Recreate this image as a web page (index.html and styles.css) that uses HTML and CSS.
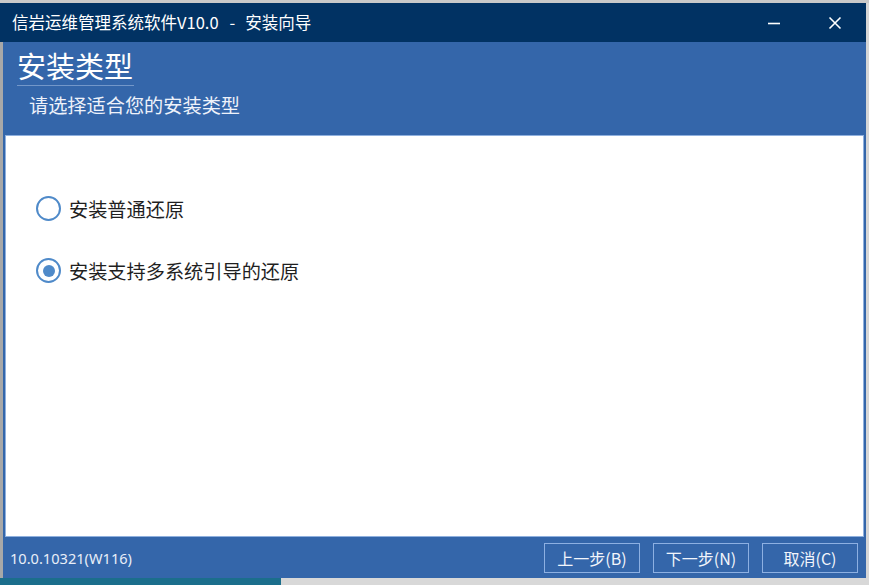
FILE: index.html
```html
<!DOCTYPE html>
<html lang="zh-CN">
<head>
<meta charset="utf-8">
<title>安装向导</title>
<link rel="stylesheet" href="styles.css">
</head>
<body>
<div class="desktop">
  <div class="bgstrip"></div>
  <div class="window">
    <div class="titlebar">
      <span class="title">信岩运维管理系统软件V10.0<span class="sep">-</span>安装向导</span>
      <div class="controls">
        <span class="ctl">
          <svg width="14" height="14" viewBox="0 0 14 14"><path d="M1 7.5h12" stroke="#fff" stroke-width="1.6"/></svg>
        </span>
        <span class="ctl">
          <svg width="14" height="14" viewBox="0 0 14 14"><path d="M1.5 1.5l11 11M12.5 1.5l-11 11" stroke="#fff" stroke-width="1.6"/></svg>
        </span>
      </div>
    </div>
    <div class="body">
      <div class="header">
        <div class="heading">安装类型</div>
        <div class="subheading">请选择适合您的安装类型</div>
      </div>
      <div class="content">
        <label class="option">
          <span class="radio"></span>
          <span class="label">安装普通还原</span>
        </label>
        <label class="option">
          <span class="radio checked"></span>
          <span class="label">安装支持多系统引导的还原</span>
        </label>
      </div>
      <div class="footer">
        <span class="version">10.0.10321(W116)</span>
        <div class="buttons">
          <span class="btn">上一步(B)</span>
          <span class="btn">下一步(N)</span>
          <span class="btn">取消(C)</span>
        </div>
      </div>
    </div>
  </div>
  <div class="taskbar">
    <div class="teal"></div>
    <div class="grey"></div>
  </div>
</div>
</body>
</html>
```
FILE: styles.css
```css
* { box-sizing: border-box; }
html, body { margin: 0; padding: 0; }
body {
  width: 869px;
  height: 585px;
  overflow: hidden;
  background: #d6d6d6;
  font-family: "Noto Sans CJK SC", "Noto Sans", sans-serif;
}
.desktop {
  display: flex;
  flex-direction: column;
  width: 869px;
  height: 585px;
}
.bgstrip {
  height: 3px;
  background: #c9c9c9;
}
.window {
  width: 866px;
  height: 575px;
  display: flex;
  flex-direction: column;
}
.titlebar {
  height: 39px;
  background: #013263;
  display: flex;
  align-items: center;
  justify-content: space-between;
  padding-left: 12px;
}
.title {
  color: #ffffff;
  font-size: 16.5px;
  line-height: 1;
  font-family: "Noto Sans CJK SC", sans-serif;
}
.sep {
  margin: 0 10px 0 11px;
}
.controls {
  display: flex;
  height: 100%;
}
.ctl {
  width: 60px;
  display: flex;
  align-items: center;
  justify-content: center;
}
.ctl:last-child { width: 62px; }
.body {
  flex: 1;
  display: flex;
  flex-direction: column;
  background: #3466aa;
  border-left: 3px solid #a8a8a8;
}
.header {
  height: 93px;
  padding: 3px 0 0 14px;
  display: flex;
  flex-direction: column;
}
.heading {
  color: #ffffff;
  font-size: 29px;
  line-height: 40px;
  align-self: flex-start;
  padding: 0 1px 0 0;
  border-bottom: 1px solid #7397c9;
}
.subheading {
  color: #eef2fa;
  font-size: 19.2px;
  line-height: 26px;
  margin: 6px 0 0 12px;
}
.content {
  height: 402px;
  margin: 0 2px 0 2px;
  background: #ffffff;
  border: 1px solid #8fb0de;
  padding: 60px 0 0 30px;
  display: flex;
  flex-direction: column;
  gap: 37px;
}
.option {
  display: flex;
  align-items: center;
  height: 25px;
}
.radio {
  width: 25px;
  height: 25px;
  border: 2.5px solid #4f8ac9;
  border-radius: 50%;
  display: flex;
  align-items: center;
  justify-content: center;
}
.radio.checked::after {
  content: "";
  width: 12px;
  height: 12px;
  border-radius: 50%;
  background: #4f8ac9;
}
.label {
  margin-left: 8px;
  font-size: 19.2px;
  color: #1f1f1f;
}
.footer {
  flex: 1;
  display: flex;
  align-items: center;
  justify-content: space-between;
  padding: 0 8px 0 7px;
}
.version {
  color: #e8eef8;
  font-size: 14.6px;
  font-family: "Noto Sans", sans-serif;
}
.buttons {
  display: flex;
  gap: 13px;
  margin-top: 1px;
}
.btn {
  width: 96px;
  height: 30px;
  border: 1px solid #8db0e2;
  display: flex;
  align-items: center;
  justify-content: center;
  color: #f2f5fb;
  font-size: 16px;
}
.taskbar {
  flex: 1;
  display: flex;
}
.teal {
  width: 281px;
  background: #1b6e8c;
}
.grey {
  flex: 1;
  background: #d8d8d8;
}
```
